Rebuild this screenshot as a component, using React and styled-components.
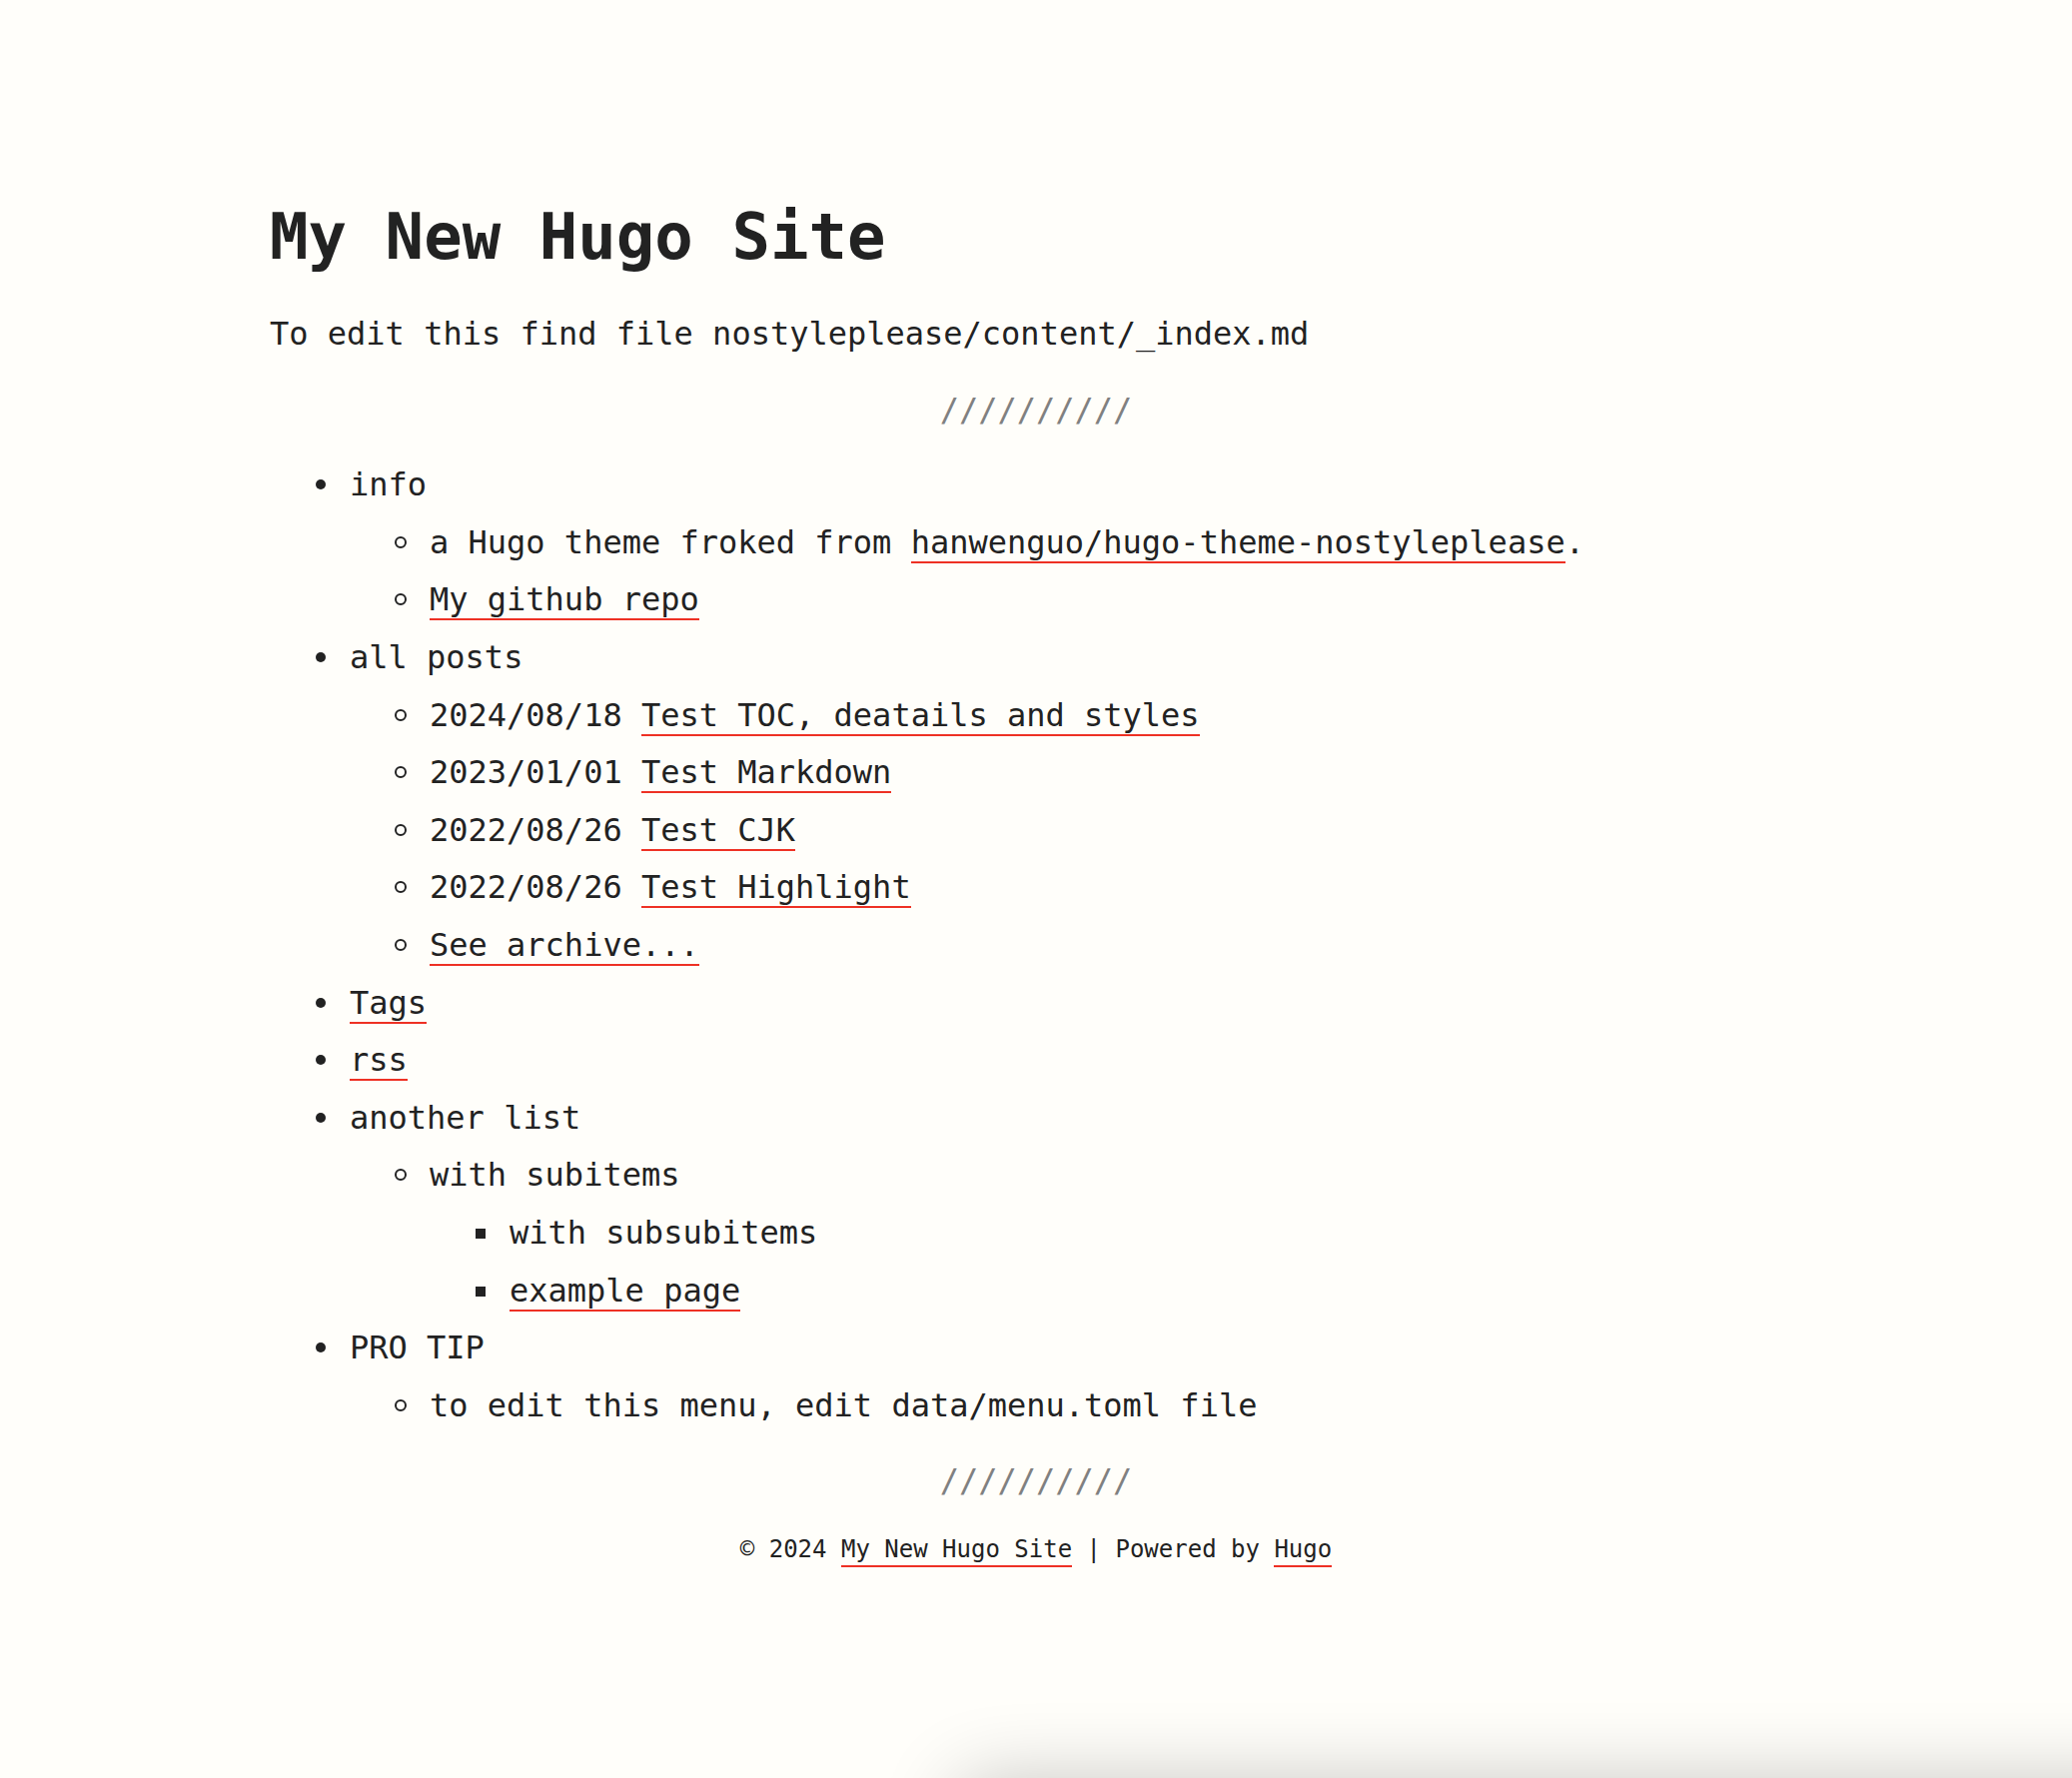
import React from 'react';
import styled, { createGlobalStyle, css } from 'styled-components';

const Global = createGlobalStyle`
  body {
    margin: 0;
    background: #fffefa;
    color: #222;
    font-family: "DejaVu Sans Mono", monospace;
    font-size: 32px;
    line-height: 1.8;
  }
`;

const Page = styled.div`
  box-sizing: border-box;
  max-width: 1534px;
  margin: 0 auto;
  padding: 192px 0 64px;
`;

const Title = styled.h1`
  margin: 0 0 24px;
  font-size: 64px;
  line-height: 90px;
  font-weight: 700;
`;

const Intro = styled.p`
  margin: 0;
`;

const Divider = styled.div`
  margin: 18px 0;
  text-align: center;
  color: #808080;
`;

const markers = {
  disc: css`
    width: 10px;
    height: 10px;
    margin: 0 24px 0 -34px;
    border-radius: 50%;
    background: currentColor;
    vertical-align: 6px;
  `,
  circle: css`
    width: 12px;
    height: 12px;
    margin: 0 23px 0 -35px;
    border: 2px solid currentColor;
    border-radius: 50%;
    vertical-align: 5px;
  `,
  square: css`
    width: 10px;
    height: 10px;
    margin: 0 24px 0 -34px;
    background: currentColor;
    vertical-align: 5px;
  `,
};

const List = styled.ul`
  margin: 0;
  padding-left: 80px;
  list-style: none;

  > li::before {
    content: "";
    display: inline-block;
    box-sizing: border-box;
    ${({ $marker }) => markers[$marker]}
  }
`;

const Link = styled.a`
  color: inherit;
  text-decoration: none;
  border-bottom: 2px solid #ee3124;
`;

const Footer = styled.footer`
  text-align: center;
  font-size: 24px;
  line-height: 42px;

  ${Link} {
    padding-bottom: 2px;
  }
`;

const Shade = styled.div`
  position: fixed;
  left: calc(50% - 76px);
  right: -160px;
  bottom: -205px;
  height: 200px;
  border-radius: 20px;
  box-shadow: 0 0 80px rgba(0, 0, 0, 0.24);
  pointer-events: none;
`;

const posts = [
  ['2024/08/18', 'Test TOC, deatails and styles'],
  ['2023/01/01', 'Test Markdown'],
  ['2022/08/26', 'Test CJK'],
  ['2022/08/26', 'Test Highlight'],
];

export default function App() {
  return (
    <>
      <Global />
      <Page>
        <main>
          <Title>My New Hugo Site</Title>
          <Intro>To edit this find file nostyleplease/content/_index.md</Intro>
          <Divider>//////////</Divider>
          <List $marker="disc">
            <li>
              info
              <List $marker="circle">
                <li>a Hugo theme froked from <Link href="#theme">hanwenguo/hugo-theme-nostyleplease</Link>.</li>
                <li><Link href="#repo">My github repo</Link></li>
              </List>
            </li>
            <li>
              all posts
              <List $marker="circle">
                {posts.map(([date, title]) => (
                  <li key={title}>{date} <Link href="#post">{title}</Link></li>
                ))}
                <li><Link href="#archive">See archive...</Link></li>
              </List>
            </li>
            <li><Link href="#tags">Tags</Link></li>
            <li><Link href="#rss">rss</Link></li>
            <li>
              another list
              <List $marker="circle">
                <li>
                  with subitems
                  <List $marker="square">
                    <li>with subsubitems</li>
                    <li><Link href="#example">example page</Link></li>
                  </List>
                </li>
              </List>
            </li>
            <li>
              PRO TIP
              <List $marker="circle">
                <li>to edit this menu, edit data/menu.toml file</li>
              </List>
            </li>
          </List>
          <Divider>//////////</Divider>
        </main>
        <Footer>
          © 2024 <Link href="#home">My New Hugo Site</Link> | Powered by <Link href="#hugo">Hugo</Link>
        </Footer>
      </Page>
      <Shade />
    </>
  );
}
